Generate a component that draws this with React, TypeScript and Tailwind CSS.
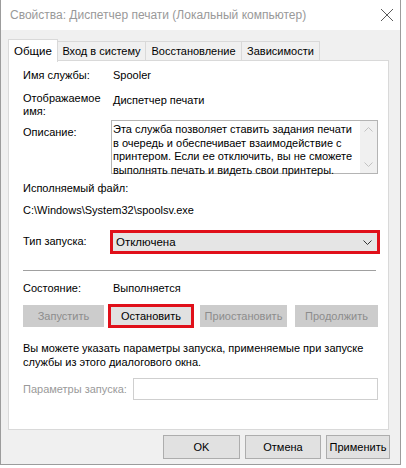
import React from "react"

const Chevron = ({ up = false, className = "" }: { up?: boolean; className?: string }) => (
    <svg width="9" height="5" viewBox="0 0 9 5" className={className}>
        <path d={up ? "M0.5 4.5 L4.5 0.5 L8.5 4.5" : "M0.5 0.5 L4.5 4.5 L8.5 0.5"} fill="none" stroke="currentColor" strokeWidth="1" />
    </svg>
)

const Btn = ({ label, w, disabled = false, className = "" }: { label: string; w: string; disabled?: boolean; className?: string }) => (
    <div
        className={`${w} h-[22px] flex items-center justify-center border ${
            disabled ? "bg-[#cccccc] border-[#cccccc] text-[#8c8c8c]" : "bg-[#e1e1e1] border-[#adadad] text-black"
        } ${className}`}
    >
        {label}
    </div>
)

export default function App() {
    const tabs = ["Вход в систему", "Восстановление", "Зависимости"]
    const tabWidths = ["w-[88px]", "w-[96px]", "w-[78px]"]

    return (
        <div className="w-[406px] h-[468px] bg-white overflow-hidden font-['Liberation_Sans',Arial,sans-serif] text-[11px] leading-[13px] text-black">
            <div className="w-[401px] h-[465px] border-l border-r border-b border-[#9c9c9c] bg-[#f0f0f0] flex flex-col">
                {/* title bar */}
                <div className="h-[30px] shrink-0 bg-white flex items-center justify-between pl-[9px] pr-[6px]">
                    <span className="text-[12px] text-[#999999]">Свойства: Диспетчер печати (Локальный компьютер)</span>
                    <svg width="14" height="14" viewBox="0 0 14 14" className="text-[#5a5a5a]">
                        <path d="M1 1 L13 13 M13 1 L1 13" stroke="currentColor" strokeWidth="1" />
                    </svg>
                </div>

                {/* tabs */}
                <div className="flex items-end pl-[7px] h-[28px] mt-[2px]">
                    <div className="w-[50px] h-[23px] -mb-[2px] bg-white border border-b-0 border-[#d9d9d9] flex items-center justify-center z-10 text-[11.5px]">
                        Общие
                    </div>
                    {tabs.map((t, i) => (
                        <div
                            key={t}
                            className={`${tabWidths[i]} h-[19px] border border-l-0 border-b-0 border-[#d9d9d9] bg-[#f0f0f0] flex items-center justify-center`}
                        >
                            {t}
                        </div>
                    ))}
                </div>

                {/* panel */}
                <div className="ml-[7px] w-[381px] h-[370px] bg-white border border-[#d9d9d9] pl-[14px] pt-[8px] flex flex-col">
                    <div className="flex h-[13px]">
                        <span className="w-[90px]">Имя службы:</span>
                        <span>Spooler</span>
                    </div>

                    <div className="flex mt-[10px] h-[26px]">
                        <span className="w-[90px]">
                            Отображаемое
                            <br />
                            имя:
                        </span>
                        <span className="mt-[2px]">Диспетчер печати</span>
                    </div>

                    <div className="flex mt-[2px]">
                        <span className="w-[88px] mt-[6px]">Описание:</span>
                        <div className="w-[267px] h-[54px] border border-[#b4b4b4] flex">
                            <p className="flex-1 pl-[1px] pt-[2px] leading-[13.5px]">
                                Эта служба позволяет ставить задания печати в очередь и обеспечивает взаимодействие с
                                принтером. Если ее отключить, вы не сможете выполнять печать и видеть свои принтеры.
                            </p>
                            <div className="w-[17px] bg-[#f0f0f0] flex flex-col items-center justify-between py-[6px] text-[#c2c2c2]">
                                <Chevron up />
                                <Chevron />
                            </div>
                        </div>
                    </div>

                    <div className="mt-[8px]">Исполняемый файл:</div>
                    <div className="mt-[9px]">C:\Windows\System32\spoolsv.exe</div>

                    <div className="flex mt-[13px]">
                        <span className="w-[87px] mt-[5px]">Тип запуска:</span>
                        <div className="w-[270px] h-[24px] border-[3px] border-[#e0101a] bg-[#e5e5e5] flex items-center justify-between pl-[3px] pr-[5px]">
                            <span className="text-[11.5px]">Отключена</span>
                            <Chevron className="text-[#333333]" />
                        </div>
                    </div>

                    <div className="mt-[16px] w-[353px] h-px bg-[#a0a0a0]" />

                    <div className="flex mt-[11px]">
                        <span className="w-[90px]">Состояние:</span>
                        <span>Выполняется</span>
                    </div>

                    <div className="flex items-center mt-[9px] h-[24px]">
                        <Btn label="Запустить" w="w-[81px]" disabled />
                        <div className="ml-[4px] w-[86px] h-[24px] border-[3px] border-[#e0101a] bg-[#e1e1e1] flex items-center justify-center">
                            Остановить
                        </div>
                        <Btn label="Приостановить" w="w-[87px]" disabled className="ml-[6px]" />
                        <Btn label="Продолжить" w="w-[83px]" disabled className="ml-[8px]" />
                    </div>

                    <p className="mt-[13px] leading-[14px]">
                        Вы можете указать параметры запуска, применяемые при запуске
                        <br />
                        службы из этого диалогового окна.
                    </p>

                    <div className="flex items-center mt-[9px]">
                        <span className="w-[110px] text-[#9a9a9a]">Параметры запуска:</span>
                        <div className="w-[245px] h-[22px] bg-white border border-[#cfcfcf]" />
                    </div>
                </div>

                {/* footer buttons */}
                <div className="flex mt-[5px] pl-[162px] gap-[5px]">
                    <div className="w-[77px] h-[24px] bg-[#e1e1e1] border border-[#adadad] flex items-center justify-center">OK</div>
                    <div className="w-[76px] h-[24px] bg-[#e1e1e1] border border-[#adadad] flex items-center justify-center">Отмена</div>
                    <div className="w-[64px] h-[24px] bg-[#e1e1e1] border border-[#adadad] flex items-center justify-center">Применить</div>
                </div>
            </div>
        </div>
    )
}
